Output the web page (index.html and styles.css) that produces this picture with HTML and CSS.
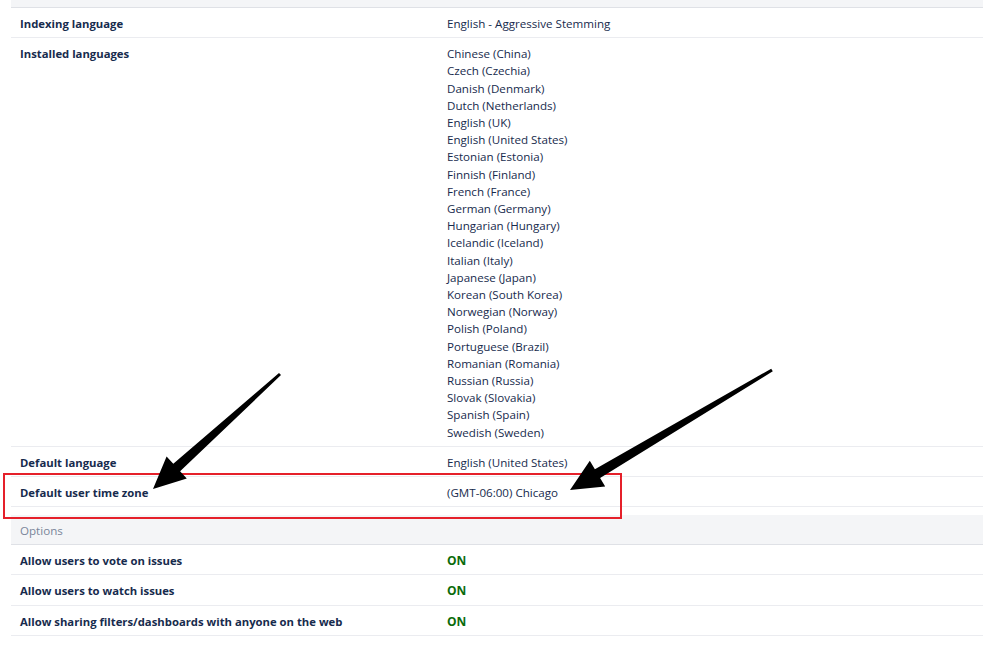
FILE: index.html
```html
<!DOCTYPE html>
<html>
<head>
<meta charset="utf-8">
<link rel="stylesheet" href="styles.css">
</head>
<body>
<div class="page">
  <div class="prev-header"></div>
  <div class="row">
    <div class="label">Indexing language</div>
    <div class="value">English - Aggressive Stemming</div>
  </div>
  <div class="row">
    <div class="label">Installed languages</div>
    <div class="value list">
      <div>Chinese (China)</div>
      <div>Czech (Czechia)</div>
      <div>Danish (Denmark)</div>
      <div>Dutch (Netherlands)</div>
      <div>English (UK)</div>
      <div>English (United States)</div>
      <div>Estonian (Estonia)</div>
      <div>Finnish (Finland)</div>
      <div>French (France)</div>
      <div>German (Germany)</div>
      <div>Hungarian (Hungary)</div>
      <div>Icelandic (Iceland)</div>
      <div>Italian (Italy)</div>
      <div>Japanese (Japan)</div>
      <div>Korean (South Korea)</div>
      <div>Norwegian (Norway)</div>
      <div>Polish (Poland)</div>
      <div>Portuguese (Brazil)</div>
      <div>Romanian (Romania)</div>
      <div>Russian (Russia)</div>
      <div>Slovak (Slovakia)</div>
      <div>Spanish (Spain)</div>
      <div>Swedish (Sweden)</div>
    </div>
  </div>
  <div class="row">
    <div class="label">Default language</div>
    <div class="value">English (United States)</div>
  </div>
  <div class="row">
    <div class="label">Default user time zone</div>
    <div class="value">(GMT-06:00) Chicago</div>
  </div>
  <div class="section-header">Options</div>
  <div class="row">
    <div class="label">Allow users to vote on issues</div>
    <div class="value on">ON</div>
  </div>
  <div class="row">
    <div class="label">Allow users to watch issues</div>
    <div class="value on">ON</div>
  </div>
  <div class="row">
    <div class="label">Allow sharing filters/dashboards with anyone on the web</div>
    <div class="value on">ON</div>
  </div>
</div>
<div class="highlight-box"></div>
<svg class="arrows" width="999" height="646" viewBox="0 0 999 646">
  <polygon points="279,372.9 173.3,463.8 166.6,456.4 153,489 186.8,478.6 180.1,471.2 281,375.1" fill="#000"/>
  <polygon points="771.2,368.7 594.9,469.3 589.8,460.7 570,490 605.2,486.5 600.1,477.9 772.8,371.3" fill="#000"/>
</svg>
</body>
</html>
```

FILE: styles.css
```css
html, body {
  margin: 0;
  padding: 0;
  background: #ffffff;
}
body {
  font-family: "Open Sans", "Noto Sans", "Liberation Sans", sans-serif;
  font-size: 11.6px;
  color: #172b4d;
  position: relative;
  width: 999px;
  height: 646px;
  overflow: hidden;
}
.page {
  margin-left: 11px;
  width: 972px;
}
.prev-header {
  height: 7px;
  background: #f4f5f7;
  border-bottom: 1px solid #dfe1e6;
}
.row {
  display: grid;
  grid-template-columns: 436px 1fr;
  border-bottom: 1px solid #ebecf0;
  line-height: 17.2px;
}
.label {
  padding: 7px 9px 5px;
  font-weight: 700;
  font-size: 11.3px;
}
.value {
  padding: 7px 0 5px;
}
.on {
  font-weight: 700;
  font-size: 12px;
  color: #0a6b0a;
}
.section-header {
  margin-top: 8px;
  height: 29px;
  line-height: 31px;
  padding-left: 9px;
  background: #f4f5f7;
  border-bottom: 1px solid #dfe1e6;
  color: #7a869a;
}
.highlight-box {
  position: absolute;
  left: 3px;
  top: 473px;
  width: 615px;
  height: 42px;
  border: 2px solid #e5202a;
}
.arrows {
  position: absolute;
  left: 0;
  top: 0;
}
```
